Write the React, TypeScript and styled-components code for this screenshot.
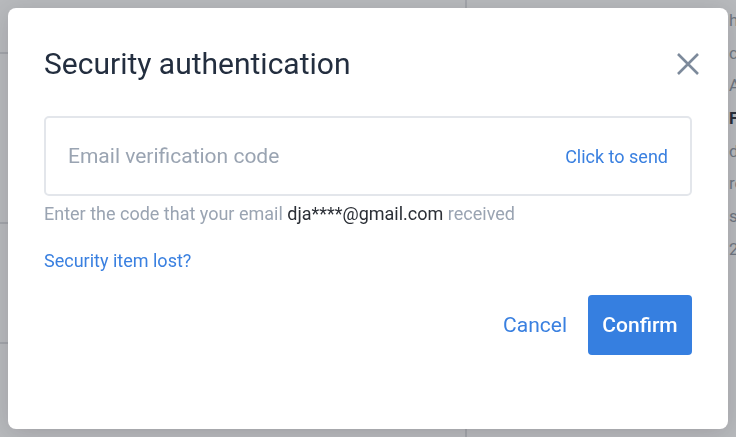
import React from "react";
import styled, { createGlobalStyle } from "styled-components";

const Global = createGlobalStyle`
  html, body { margin: 0; padding: 0; }
  body {
    width: 736px;
    height: 437px;
    overflow: hidden;
    font-family: Roboto, "Noto Sans", Arial, sans-serif;
    background: #f7f8fa;
  }
`;

const Page = styled.div`
  width: 736px;
  height: 437px;
  display: grid;
  grid-template-columns: 465px 1fr;
  background: #f7f8fa;
  overflow: hidden;
`;

const LeftPane = styled.div`
  display: flex;
  flex-direction: column;
  padding-top: 52px;
`;

const Rule = styled.div<{ $h: number }>`
  height: ${(p) => p.$h}px;
  border-top: 2px solid #d9dbe0;
`;

const RightPane = styled.div`
  border-left: 2px solid #d9dbe0;
  display: flex;
  flex-direction: column;
  padding: 4px 0 0 262px;
  white-space: nowrap;
  font-size: 17px;
  color: #8f98a5;
  overflow: hidden;
`;

const Line = styled.div<{ $bold?: boolean; $dark?: boolean }>`
  height: 32.7px;
  line-height: 32.7px;
  overflow: hidden;
  font-weight: ${(p) => (p.$bold ? 700 : 400)};
  color: ${(p) => (p.$dark ? "#2b3340" : "#8f98a5")};
`;

const Overlay = styled.div`
  position: fixed;
  inset: 0;
  background: rgba(40, 42, 50, 0.3);
  display: flex;
  padding: 8px;
`;

const Dialog = styled.div`
  flex: 1;
  background: #fff;
  border-radius: 8px;
  box-shadow: 0 4px 24px rgba(0, 0, 0, 0.15);
  padding: 40px 36px 0 36px;
  display: flex;
  flex-direction: column;
`;

const Header = styled.div`
  display: flex;
  align-items: center;
  justify-content: space-between;
  height: 32px;
`;

const Title = styled.h2`
  margin: 0;
  font-size: 30px;
  line-height: 32px;
  font-weight: 400;
  color: #232e3f;
`;

const CloseButton = styled.button`
  border: 0;
  background: none;
  padding: 0;
  margin-right: -7px;
  width: 22px;
  height: 22px;
  display: flex;
  align-items: center;
  justify-content: center;
  cursor: pointer;
`;

const Field = styled.div`
  margin-top: 36px;
  height: 80px;
  box-sizing: border-box;
  border: 2px solid #e3e6eb;
  border-radius: 5px;
  display: flex;
  align-items: center;
  justify-content: space-between;
  padding: 0 22px;
`;

const Input = styled.input`
  border: 0;
  outline: none;
  flex: 1;
  font-family: inherit;
  font-size: 21px;
  color: #232e3f;
  padding: 0;
  &::placeholder { color: #9aa4b2; }
`;

const SendLink = styled.a`
  font-size: 18px;
  color: #3a80e0;
  text-decoration: none;
  cursor: pointer;
`;

const Hint = styled.p`
  margin: 6px 0 0;
  font-size: 18px;
  line-height: 24px;
  color: #9aa4b2;
`;

const Email = styled.span`
  color: #2b2f36;
`;

const LostLink = styled.a`
  margin-top: 23px;
  font-size: 18px;
  line-height: 24px;
  color: #3a80e0;
  text-decoration: none;
  align-self: flex-start;
  cursor: pointer;
`;

const Footer = styled.div`
  margin-top: 22px;
  display: flex;
  justify-content: flex-end;
  align-items: center;
  gap: 21px;
`;

const TextButton = styled.button`
  border: 0;
  background: none;
  font-family: inherit;
  font-size: 21px;
  color: #3a80e0;
  padding: 0;
  cursor: pointer;
`;

const PrimaryButton = styled.button`
  border: 0;
  background: #367fe0;
  color: #fff;
  font-family: inherit;
  font-size: 21px;
  font-weight: 500;
  width: 104px;
  height: 60px;
  border-radius: 4px;
  cursor: pointer;
`;

export default function App() {
  return (
    <>
      <Global />
      <Page>
        <LeftPane>
          <Rule $h={168} />
          <Rule $h={118} />
          <Rule $h={100} />
        </LeftPane>
        <RightPane>
          <Line>hash</Line>
          <Line>confirmations</Line>
          <Line>Account</Line>
          <Line $bold $dark>Fee</Line>
          <Line>deposit</Line>
          <Line>received</Line>
          <Line>settled</Line>
          <Line>2,000</Line>
        </RightPane>
      </Page>
      <Overlay>
        <Dialog>
          <Header>
            <Title>Security authentication</Title>
            <CloseButton aria-label="Close">
              <svg width="22" height="22" viewBox="0 0 22 22">
                <path d="M1 1 L21 21 M21 1 L1 21" stroke="#7d8a9b" strokeWidth="2.6" />
              </svg>
            </CloseButton>
          </Header>
          <Field>
            <Input placeholder="Email verification code" />
            <SendLink>Click to send</SendLink>
          </Field>
          <Hint>
            Enter the code that your email <Email>dja****@gmail.com</Email> received
          </Hint>
          <LostLink>Security item lost?</LostLink>
          <Footer>
            <TextButton>Cancel</TextButton>
            <PrimaryButton>Confirm</PrimaryButton>
          </Footer>
        </Dialog>
      </Overlay>
    </>
  );
}
